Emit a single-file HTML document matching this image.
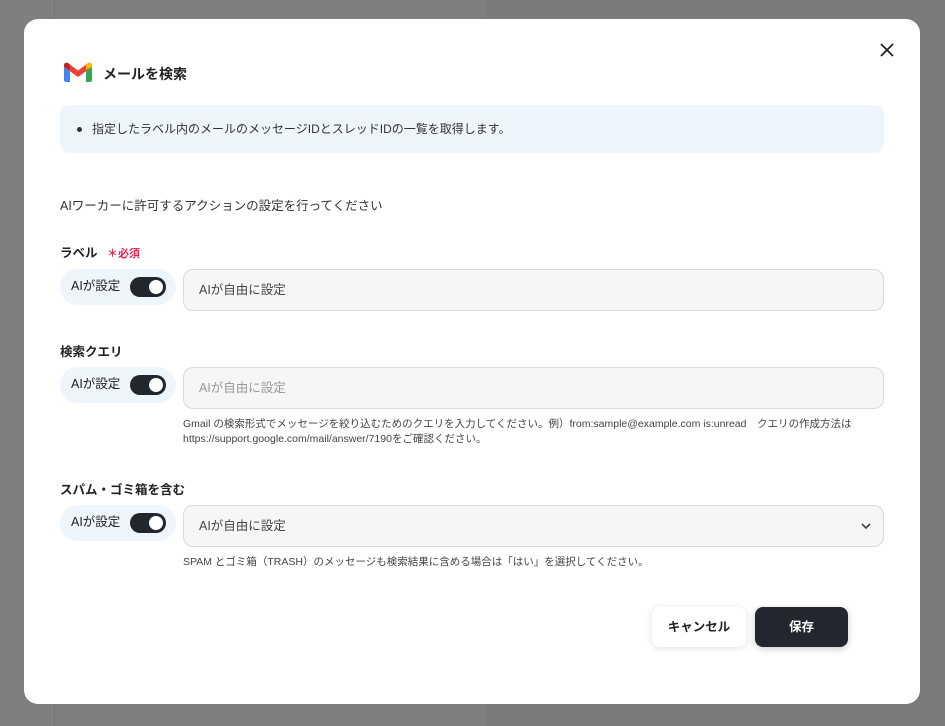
<!DOCTYPE html>
<html><head><meta charset="utf-8"><style>
*{box-sizing:border-box;margin:0;padding:0}
body{width:945px;height:726px;overflow:hidden;background:#7f7f7f;font-family:"Liberation Sans","Noto Sans CJK JP",sans-serif;color:#222;position:relative}
.bgr{position:absolute;left:486px;top:0;width:459px;height:726px;background:#7a7b7d}
.bgl{position:absolute;left:54px;top:0;width:1px;height:726px;background:#737373}
.modal{position:absolute;left:24px;top:19px;width:896px;height:685px;background:#fff;border-radius:14px}
.a{position:absolute}
.title{left:79px;top:45px;font-size:14px;font-weight:bold;color:#222}
.info{left:36px;top:86px;width:824px;height:48px;background:#eef5fd;border-radius:10px;font-size:12px;line-height:48px;padding-left:32px;color:#333}
.info:before{content:"";position:absolute;left:17px;top:22px;width:5px;height:5px;border-radius:50%;background:#333}
.lbl{font-size:12.5px;font-weight:bold;color:#222}
.pill{left:36px;width:116px;height:36px;background:#eef5fd;border-radius:18px;font-size:12.5px;line-height:34px;padding-left:11px;color:#222}
.tg{position:absolute;left:70px;top:8px;width:36px;height:20px;border-radius:10px;background:#22262e}
.tg:after{content:"";position:absolute;right:3px;top:3px;width:14px;height:14px;border-radius:50%;background:#fff}
.inp{left:159px;width:701px;height:42px;background:#f5f6f8;border:1px solid #d6d9de;border-radius:10px;font-size:12.5px;line-height:40px;padding-left:15px;color:#444}
.hint{left:159px;font-size:10.5px;line-height:15px;color:#444}
</style></head><body>
<div class="bgr"></div><div class="bgl"></div>
<div class="modal">
<svg class="a" style="left:856px;top:24px" width="14" height="14" viewBox="0 0 14 14"><path d="M1 1L13 13M13 1L1 13" stroke="#222" stroke-width="1.8"/></svg>
<svg class="a" style="left:39px;top:43px" width="30" height="22" viewBox="0 0 30 22"><path d="M1 5v13c0 1.2.8 2 2 2h4V8z" fill="#4285f4"/><path d="M23 8v12h4c1.2 0 2-.8 2-2V5z" fill="#34a853"/><path d="M1 5l14 10 14-10V3.5C29 1 26.5 0 24.5 1.5L15 8.5 5.5 1.5C3.5 0 1 1 1 3.5z" fill="#ea4335"/><path d="M23 3v5l6-3V3.5C29 1 26.5 0 24.5 1.5z" fill="#fbbc04"/><path d="M1 3.5V5l6 3V3L5.5 1.5C3.5 0 1 1 1 3.5z" fill="#c5221f"/></svg>
<div class="a title">メールを検索</div>
<div class="a info">指定したラベル内のメールのメッセージIDとスレッドIDの一覧を取得します。</div>
<div class="a" style="left:36px;top:176px;font-size:12.5px;color:#333">AIワーカーに許可するアクションの設定を行ってください</div>
<div class="a lbl" style="top:223px;left:36px">ラベル <span style="color:#e8264f;font-size:11px;margin-left:6px">＊必須</span></div>
<div class="a pill" style="top:250px">AIが設定<div class="tg"></div></div>
<div class="a inp" style="top:250px">AIが自由に設定</div>
<div class="a lbl" style="top:322px;left:36px">検索クエリ</div>
<div class="a pill" style="top:348px">AIが設定<div class="tg"></div></div>
<div class="a inp" style="top:348px;color:#999">AIが自由に設定</div>
<div class="a hint" style="top:398px">Gmail の検索形式でメッセージを絞り込むためのクエリを入力してください。例）from:sample@example.com is:unread　クエリの作成方法は<br>https://support.google.com/mail/answer/7190をご確認ください。</div>
<div class="a lbl" style="top:460px;left:36px">スパム・ゴミ箱を含む</div>
<div class="a pill" style="top:486px">AIが設定<div class="tg"></div></div>
<div class="a inp" style="top:486px">AIが自由に設定
<svg style="position:absolute;right:12px;top:17px" width="10" height="7" viewBox="0 0 10 7"><path d="M1 1l4 4 4-4" stroke="#444" stroke-width="1.6" fill="none"/></svg></div>
<div class="a hint" style="top:536px">SPAM とゴミ箱（TRASH）のメッセージも検索結果に含める場合は「はい」を選択してください。</div>
<div class="a" style="left:628px;top:588px;width:94px;height:40px;background:#fff;border-radius:8px;box-shadow:0 1px 8px rgba(0,0,0,.12);font-size:12.5px;font-weight:bold;line-height:40px;text-align:center">キャンセル</div>
<div class="a" style="left:731px;top:588px;width:93px;height:40px;background:#22262e;border-radius:8px;box-shadow:0 2px 8px rgba(0,0,0,.2);color:#fff;font-size:12.5px;font-weight:bold;line-height:40px;text-align:center">保存</div>
</div>
</body></html>
